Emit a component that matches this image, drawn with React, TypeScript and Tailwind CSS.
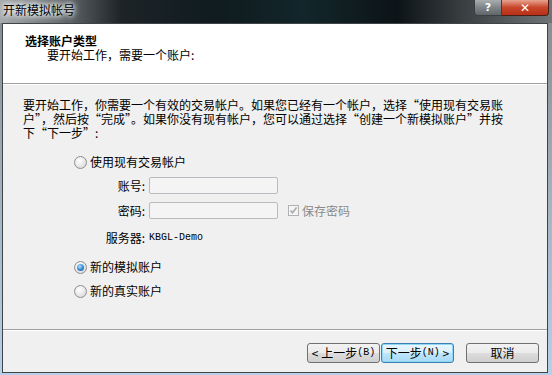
import React from 'react';

const cjk = "font-['Noto_Sans_CJK_SC','Noto_Sans',sans-serif]";

const Radio = ({ checked }: { checked?: boolean }) => (
  <span className="relative flex h-[13px] w-[13px] shrink-0 items-center justify-center rounded-full border border-[#8f8f8f] bg-[radial-gradient(circle_at_40%_35%,#ffffff,#e4e4e4_60%,#cfcfcf)]">
    {checked && (
      <span className="h-[7px] w-[7px] rounded-full bg-[radial-gradient(circle_at_40%_35%,#b9e3fb,#3a8fd6_50%,#154c87)]" />
    )}
  </span>
);

const Field = ({ label }: { label: string }) => (
  <div className="flex h-[17px] items-center">
    <span className="w-[146px] pr-[4px] text-right text-[12px] leading-[17px] text-black">{label}</span>
    <span className="h-[17px] w-[129px] rounded-[2px] border border-[#b8bcc0] bg-[#f4f4f4]" />
  </div>
);

export default function App() {
  return (
    <div className={`flex h-[375px] w-[552px] flex-col overflow-hidden bg-[linear-gradient(to_bottom,#85898b,#a4b4c2_55%,#b6d0ea)] ${cjk}`}>
      {/* title bar */}
      <div className="relative flex h-[23px] shrink-0 items-start bg-[linear-gradient(to_right,#a7abad_0%,#6d7275_10%,#1d2428_22%,#0f1b1f_40%,#13262b_55%,#0c1417_72%,#3a3f41_84%,#707477_100%)]">
        <span className="ml-[3px] mt-[3px] text-[12px] leading-[14px] text-black [text-shadow:0_0_4px_#ffffff,0_0_6px_#ffffff,0_0_8px_#ffffff]">
          开新模拟帐号
        </span>
        <div className="absolute right-[3px] top-0 flex h-[16px]">
          <div className="flex w-[28px] items-center justify-center rounded-bl-[4px] border border-t-0 border-[#3b3f42] bg-[linear-gradient(to_bottom,#a9adb0,#7e8488_50%,#60676b)] text-[11px] font-bold leading-none text-white [font-family:'DejaVu_Sans',sans-serif]">
            ?
          </div>
          <div className="flex w-[47px] items-center justify-center rounded-br-[4px] border border-l-0 border-t-0 border-[#4a1e14] bg-[linear-gradient(to_bottom,#e8a492,#c7452a_50%,#b8311a)] text-[12px] font-bold leading-none text-white [font-family:'DejaVu_Sans',sans-serif]">
            ✕
          </div>
        </div>
      </div>

      {/* client area */}
      <div className="flex pl-[2px]">
        <div className="flex h-[350px] w-[546px] flex-col border border-[#3f4447] bg-[#f0f0f0]">
          {/* header */}
          <div className="h-[59px] shrink-0 bg-white pl-[22px] pt-[10px]">
            <div className="text-[12px] font-bold leading-[14px] text-black">选择账户类型</div>
            <div className="pl-[22px] text-[12px] leading-[14px] text-black">要开始工作，需要一个账户:</div>
          </div>
          <div className="h-px shrink-0 bg-[#a0a0a0]" />
          <div className="h-px shrink-0 bg-white" />

          {/* body */}
          <div className="flex-1">
            <div className="ml-[20px] mt-[13px] whitespace-nowrap text-[12px] leading-[14px] text-black">
              <div>要开始工作，你需要一个有效的交易帐户。如果您已经有一个帐户，选择“使用现有交易账</div>
              <div>户”，然后按“完成”。如果你没有现有帐户，您可以通过选择“创建一个新模拟账户”并按</div>
              <div>下“下一步”:</div>
            </div>

            <div className="ml-[71px] mt-[14px] flex h-[16px] items-center gap-[3px]">
              <Radio />
              <span className="text-[12px] leading-[16px] text-black">使用现有交易帐户</span>
            </div>

            <div className="mt-[7px]">
              <Field label="账号:" />
            </div>
            <div className="mt-[8px] flex items-center">
              <Field label="密码:" />
              <div className="ml-[10px] flex items-center gap-[3px]">
                <span className="flex h-[11px] w-[11px] items-center justify-center border border-[#b1b1b1] bg-[#f4f4f4]">
                  <svg width="9" height="9" viewBox="0 0 9 9">
                    <path d="M1.5 4.5 L3.5 6.8 L7.6 1.6" fill="none" stroke="#a9a9a9" strokeWidth="1.6" />
                  </svg>
                </span>
                <span className="text-[12px] leading-[16px] text-[#8a8a8a]">保存密码</span>
              </div>
            </div>

            <div className="mt-[12px] flex h-[14px] items-center">
              <span className="w-[146px] pr-[4px] text-right text-[12px] leading-[14px] text-black">服务器:</span>
              <span className="text-[10px] leading-[14px] text-black [font-family:'Liberation_Mono',monospace]">KBGL-Demo</span>
            </div>

            <div className="ml-[71px] mt-[14px] flex h-[16px] items-center gap-[3px]">
              <Radio checked />
              <span className="text-[12px] leading-[16px] text-black">新的模拟账户</span>
            </div>
            <div className="ml-[71px] mt-[8px] flex h-[16px] items-center gap-[3px]">
              <Radio />
              <span className="text-[12px] leading-[16px] text-black">新的真实账户</span>
            </div>
          </div>

          {/* footer */}
          <div className="h-px shrink-0 bg-[#a0a0a0]" />
          <div className="h-px shrink-0 bg-white" />
          <div className="flex h-[41px] shrink-0 items-start justify-end pr-[8px] pt-[12px]">
            <button className="flex h-[20px] w-[73px] items-center justify-center rounded-[3px] border border-[#707070] bg-[linear-gradient(to_bottom,#f2f2f2_0%,#ebebeb_50%,#dddddd_51%,#cfcfcf_100%)] text-[12px] leading-none text-black">
              &lt; 上一步<span className="[font-family:'Liberation_Mono',monospace] text-[10px]">(B)</span>
            </button>
            <button className="ml-[1px] flex h-[20px] w-[73px] items-center justify-center rounded-[3px] border border-[#3c7fb1] bg-[linear-gradient(to_bottom,#eaf6fd_0%,#d9f0fc_50%,#bee6fd_51%,#a7d9f5_100%)] text-[12px] leading-none text-black shadow-[inset_0_0_0_1px_#8fd6f7]">
              下一步<span className="[font-family:'Liberation_Mono',monospace] text-[10px]">(N)</span>&nbsp;&gt;
            </button>
            <button className="ml-[12px] flex h-[20px] w-[73px] items-center justify-center rounded-[3px] border border-[#707070] bg-[linear-gradient(to_bottom,#f2f2f2_0%,#ebebeb_50%,#dddddd_51%,#cfcfcf_100%)] text-[12px] leading-none text-black">
              取消
            </button>
          </div>
        </div>
      </div>
    </div>
  );
}
